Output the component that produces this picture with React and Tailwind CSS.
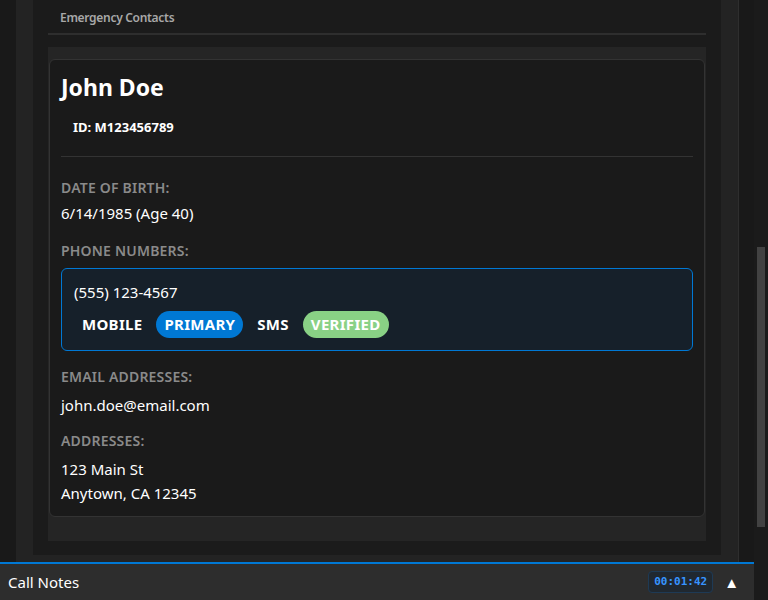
import React from "react";

const font = { fontFamily: '"Segoe UI", "Noto Sans", "Open Sans", sans-serif' };

const phoneTags = [
  { label: "MOBILE", pill: "" },
  { label: "PRIMARY", pill: "bg-[#0078d4] rounded-full" },
  { label: "SMS", pill: "" },
  { label: "VERIFIED", pill: "bg-[#89d185] rounded-full" },
];

const Label = ({ children, className = "" }) => (
  <p className={`text-[14px] font-semibold tracking-[0.2px] text-[#8a8a8a] leading-[18px] ${className}`}>{children}</p>
);

const App = () => {
  return (
    <div className="w-[768px] h-[600px] flex bg-[#1b1b1b] overflow-hidden text-white" style={font}>
      {/* main column */}
      <div className="w-[754px] h-full flex flex-col">
        <div className="flex-1 flex bg-[#191919] pl-4 overflow-hidden">
          <div className="w-[723px] bg-[#232323] px-[17px] pb-[7px] border-r border-[#2e2e2e]">
            <div className="h-full bg-[#1b1b1b] px-[15px]">
              {/* section header */}
              <div className="h-[35px] border-b-2 border-[#2e2e2e] flex items-start pt-[9px] pl-[12px]">
                <p className="text-[12px] font-semibold text-[#a8a8a8] leading-[18px] tracking-[-0.3px]">Emergency Contacts</p>
              </div>

              {/* contact box */}
              <div className="mt-[12px] bg-[#252525] pt-[12px] pb-[24px]">
                <div className="ml-px mr-px bg-[#1a1a1a] border border-[#333] rounded-md px-[11px] pt-[12px] pb-[11px]">
                  <p className="text-[23px] font-bold leading-[30px]">John Doe</p>
                  <p className="mt-[16px] ml-[12px] text-[13px] font-bold leading-[18px]">ID: M123456789</p>
                  <div className="mt-[20px] border-t border-[#333]" />

                  <Label className="mt-[22px]">DATE OF BIRTH:</Label>
                  <p className="mt-[6px] text-[15px] leading-[20px]">6/14/1985 (Age 40)</p>

                  <Label className="mt-[19px]">PHONE NUMBERS:</Label>
                  <div className="mt-[8px] border border-[#0078d4] bg-[#16202a] rounded-md px-[12px] pt-[13px] pb-[12px]">
                    <p className="text-[15px] leading-[20px]">(555) 123-4567</p>
                    <div className="mt-[9px] flex items-center gap-[6px]">
                      {phoneTags.map((tag, index) => (
                        <span key={index} className={`px-[8px] h-[27px] flex items-center text-[15px] font-bold tracking-[0.3px] leading-none ${tag.pill}`}>
                          {tag.label}
                        </span>
                      ))}
                    </div>
                  </div>

                  <Label className="mt-[17px]">EMAIL ADDRESSES:</Label>
                  <p className="mt-[9px] text-[15px] leading-[20px]">john.doe@email.com</p>

                  <Label className="mt-[17px]">ADDRESSES:</Label>
                  <p className="mt-[7px] text-[15px] leading-[24px]">
                    123 Main St
                    <br />
                    Anytown, CA 12345
                  </p>
                </div>
              </div>
            </div>
          </div>
        </div>

        {/* call notes bar */}
        <div className="h-[38px] border-t-2 border-[#0078d4] bg-[#2d2d2d] flex items-center pl-[8px] pr-[15px]">
          <p className="flex-1 text-[15px] leading-[20px]">Call Notes</p>
          <span
            className="px-[5px] h-[22px] flex items-center border border-[#1e3a55] bg-[#202830] rounded-sm text-[11px] font-bold text-[#3794ff]"
            style={{ fontFamily: '"DejaVu Sans Mono", monospace' }}
          >
            00:01:42
          </span>
          <span className="ml-[11px] text-[15px] leading-none">▲</span>
        </div>
      </div>

      {/* scrollbar */}
      <div className="w-[14px] h-full pt-[247px] pl-[3px]">
        <div className="w-[8px] h-[280px] bg-[#424242]" />
      </div>
    </div>
  );
};

export default App;
